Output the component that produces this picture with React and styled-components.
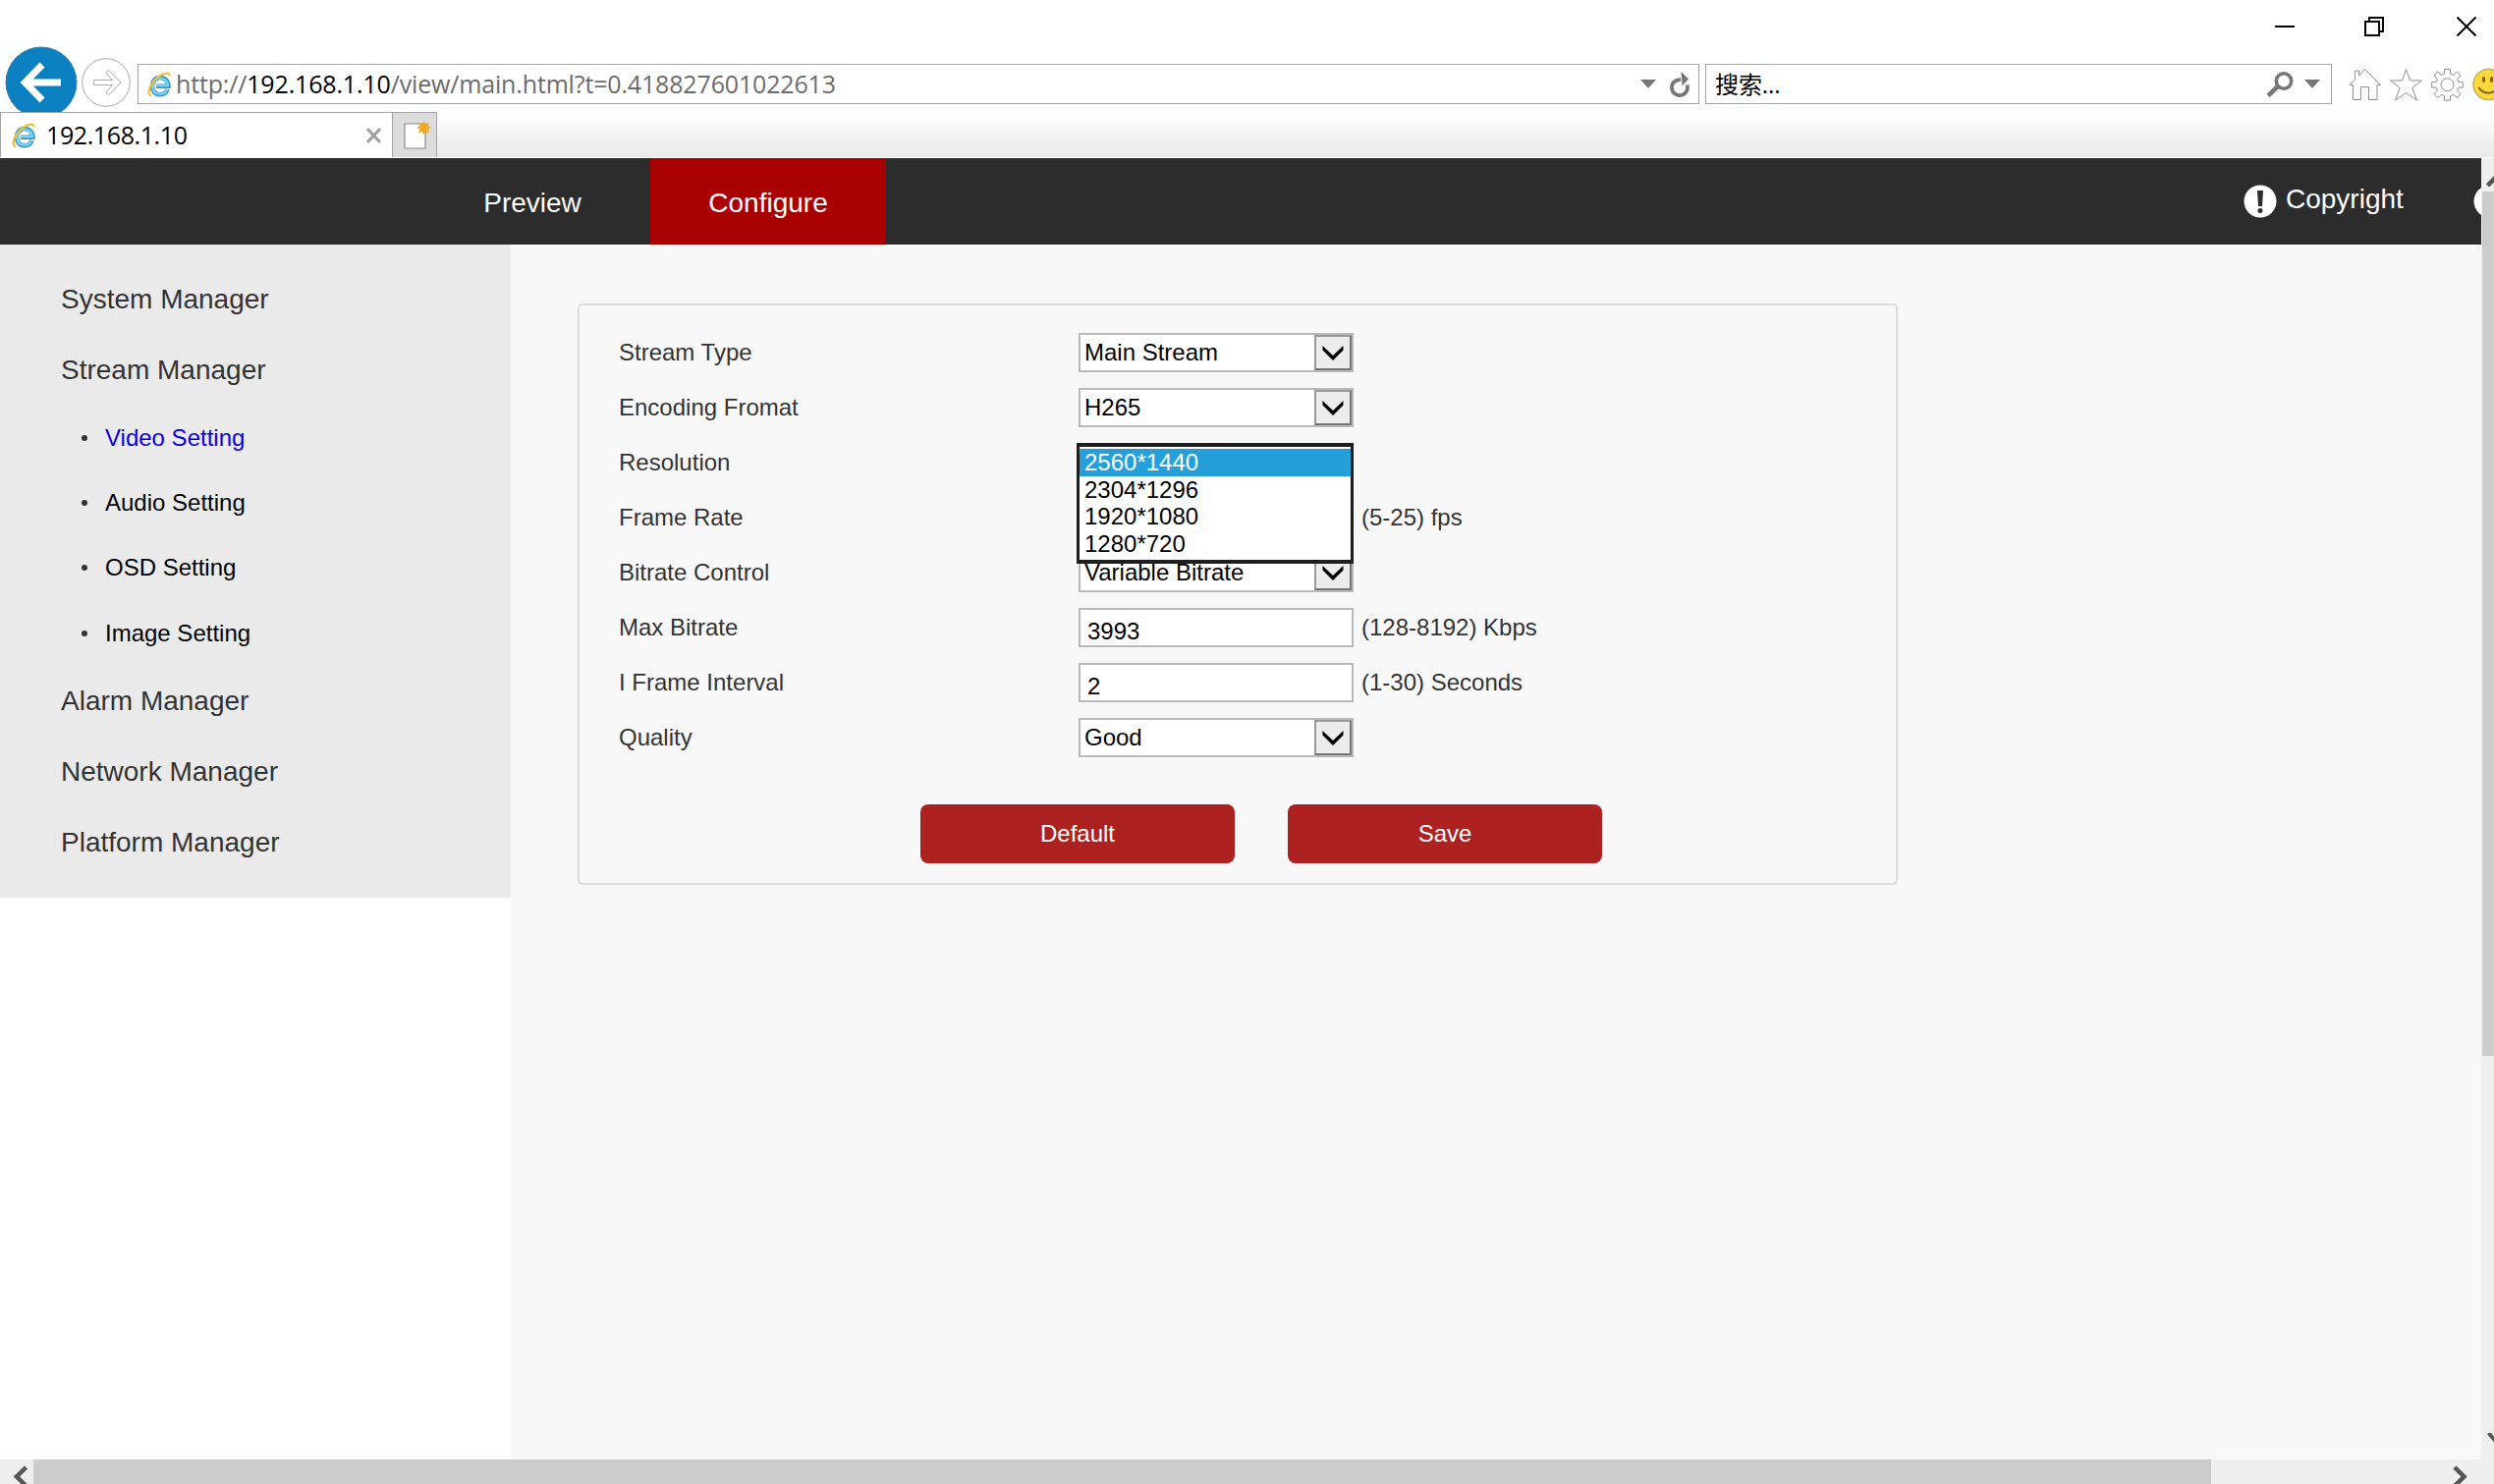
import * as React from 'react';
import styled, { createGlobalStyle } from 'styled-components';

const GlobalStyle = createGlobalStyle`
  * {
    box-sizing: border-box;
  }

  body {
    margin: 0;
    overflow: hidden;
    background: #fff;
    font-family: 'Liberation Sans', Arial, sans-serif;
  }
`;

const Window = styled.div`
  display: flex;
  flex-direction: column;
  width: 2539px;
  height: 1511px;
  overflow: hidden;
  background: #fdfefe;
`;

/* browser chrome */

const TitleBar = styled.div`
  display: flex;
  justify-content: flex-end;
  align-items: center;
  gap: 70px;
  height: 47px;
  padding: 7px 17px 0 0;
`;

const AddressRow = styled.div`
  display: flex;
  align-items: flex-start;
  height: 67px;
  overflow: hidden;
  padding-left: 5px;
`;

const BackButton = styled.svg`
  flex: none;
  width: 74px;
  height: 74px;
`;

const ForwardButton = styled.svg`
  flex: none;
  width: 50px;
  height: 50px;
  margin: 12px 7px 0 4px;
`;

const Field = styled.div`
  display: flex;
  align-items: center;
  flex: none;
  width: ${(p) => p.$width}px;
  height: 41px;
  margin: 18px 6px 0 0;
  padding: 0 ${(p) => p.$right}px 0 9px;
  border: 1px solid #a3a4a6;
  background: #fff;
`;

const Url = styled.div`
  flex: 1;
  margin-left: 4px;
  font: 25px/37px 'Open Sans', sans-serif;
  letter-spacing: -0.16px;
  color: #6b6b6b;

  b {
    font-weight: 400;
    color: #000;
  }
`;

const SearchText = styled.div`
  flex: 1;
  font: 24px/37px 'Open Sans', 'Noto Sans CJK SC', sans-serif;
  letter-spacing: -0.1px;
  color: #000;
`;

const Tools = styled.div`
  display: flex;
  flex: none;
  gap: 9px;
  margin: 22px 0 0 11px;
`;

const Icon = styled.svg`
  flex: none;
  display: block;
  margin-left: ${(p) => p.$left || 0}px;
`;

const TabStrip = styled.div`
  display: flex;
  height: 47px;
  border-bottom: 1px solid #fff;
  background: linear-gradient(#fdfdfd 10%, #e9e9e9);
`;

const Tab = styled.div`
  display: flex;
  align-items: center;
  width: 399px;
  padding: 0 11px 0 11px;
  border: solid #a3a4a6;
  border-width: 1px 0 0 1px;
  background: #fff;
  font: 25px/44px 'Open Sans', sans-serif;
  letter-spacing: -0.4px;

  span {
    flex: 1;
    margin: -1px 0 0 10px;
  }
`;

const NewTab = styled.div`
  width: 46px;
  padding: 6px 0 0 10px;
  border: 1px solid #a3a4a6;
  border-bottom: none;
  background: #dcdcdc;
`;

/* page */

const Viewport = styled.div`
  display: flex;
  height: 1325px;
`;

const Page = styled.div`
  width: 2526px;
  overflow: hidden;
`;

const NavBar = styled.div`
  display: flex;
  height: 88px;
  padding-left: 422px;
  background: #2c2c2c;
  color: #fff;
`;

const NavItem = styled.div`
  width: 240px;
  font-size: 28px;
  line-height: 92px;
  text-align: center;
  background: ${(p) => (p.$active ? '#a90000' : 'transparent')};
`;

const NavRight = styled.div`
  display: flex;
  align-items: flex-start;
  margin-left: auto;
  padding-top: 27px;
  font-size: 28px;
  line-height: 34px;
`;

const NavLink = styled.div`
  display: flex;
  width: 234px;

  span {
    margin: -2px 0 0 9px;
  }
`;

const Clip = styled.div`
  width: 8px;
  overflow: hidden;
`;

const Body = styled.div`
  display: flex;
  align-items: flex-start;
  height: 1237px;
`;

const Sidebar = styled.div`
  flex: none;
  width: 520px;
  height: 665px;
  padding-top: 20px;
  background: #eaeaea;
`;

const MenuItem = styled.div`
  height: 72px;
  padding-left: 62px;
  font-size: 28px;
  line-height: 72px;
  color: #333;
`;

const SubItem = styled.div`
  display: flex;
  align-items: center;
  height: 66.2px;
  padding-left: 83px;
  font-size: 24px;
  color: ${(p) => (p.$active ? '#0c00dc' : '#000')};

  &::before {
    content: '';
    width: 6px;
    height: 6px;
    margin-right: 18px;
    border-radius: 50%;
    background: #333;
  }
`;

const Content = styled.div`
  flex: 1;
  height: 100%;
  padding: 59px 0 0 68px;
  border-top: 1px solid #fff;
  background: #f8f8f8;
`;

const Panel = styled.div`
  width: 1344px;
  height: 592px;
  padding: 20px 0 0 40px;
  border: 2px solid #dcdddd;
  border-radius: 5px;
`;

const Row = styled.div`
  display: flex;
  height: 56px;
  padding-top: 8px;
  font-size: 24px;
  line-height: 40px;
  color: #333;
`;

const Label = styled.div`
  width: 468px;
`;

const Control = styled.div`
  position: relative;
  width: 280px;
  height: 40px;
  margin-right: 8px;
`;

const SelectBox = styled.div`
  display: flex;
  justify-content: space-between;
  height: 40px;
  padding-left: 4px;
  border: 2px solid #b9b9b9;
  background: #fff;
  line-height: 35px;
  color: #000;
`;

const Arrow = styled.div`
  display: flex;
  align-items: center;
  justify-content: center;
  width: 38px;
  border: 2px solid #757575;
  border-left-color: #999;
  border-top-color: #999;
  background: #ececec;
`;

const TextBox = styled.input`
  display: block;
  width: 280px;
  height: 40px;
  padding: 8px 0 0 7px;
  border: 2px solid #b9b9b9;
  background: #fff;
  font: 24px 'Liberation Sans', Arial, sans-serif;
  color: #000;
  outline: none;
`;

const Options = styled.div`
  position: absolute;
  z-index: 2;
  top: 0;
  left: -2px;
  width: 282px;
  height: 123px;
  padding-top: 2px;
  border: solid #1e1e1e;
  border-width: 4px 3px;
  background: #fff;
`;

const Option = styled.div`
  height: 27.5px;
  padding-left: 5px;
  line-height: 28px;
  color: ${(p) => (p.$selected ? '#fff' : '#000')};
  background: ${(p) => (p.$selected ? '#259fda' : 'transparent')};
`;

const Buttons = styled.div`
  display: flex;
  gap: 54px;
  margin: 40px 0 0 307px;
`;

const Button = styled.button`
  width: 320px;
  height: 60px;
  border: none;
  border-radius: 8px;
  background: #ae2121;
  color: #fff;
  font: 24px 'Liberation Sans', Arial, sans-serif;
`;

const VerticalScroll = styled.div`
  display: flex;
  flex-direction: column;
  width: 13px;
  padding: 15px 0 15px 1px;
  background: #efefef;
`;

const VerticalThumb = styled.div`
  flex: none;
  height: 880px;
  margin: 5px 0 auto;
  background: #cbcbcb;
`;

const HorizontalScroll = styled.div`
  display: flex;
  height: 25px;
  background: #efefef;
`;

const HorizontalThumb = styled.div`
  width: 2217px;
  margin: 0 246px 0 6px;
  background: #cbcbcb;
`;

const IeLogo = () => (
  <Icon width="25" height="26" viewBox="0 0 25 26" fill="none">
    <path d="M20.500 18C18.500 23 14.500 23.300 13 23.300 8 23.300 5 19.500 5 14.500S8.500 6 13 6s8.500 3.500 8.300 8.800H9" stroke="#2f8fc4" strokeWidth="4.600" />
    <path d="M19.800 18.200C18.500 22.500 14.500 22.800 13 22.800 8 22.800 5.500 19.500 5.500 14.500S8.500 6.500 13 6.500s8 3.500 7.800 7.800H9" stroke="#76d3f7" strokeWidth="2.600" />
    <path d="M4 24.500C-1.500 23 3 11 12 4.500 17 1 22.500.5 22.500 4" stroke="#efc22f" strokeWidth="2.200" />
  </Icon>
);

const Triangle = () => (
  <Icon width="16" height="9" viewBox="0 0 16 9">
    <path d="M0 0h16L8 9z" fill="#777" />
  </Icon>
);

const Alert = () => (
  <Icon width="34" height="34" viewBox="0 0 34 34">
    <circle cx="17" cy="17" r="16.500" fill="#fff" />
    <path d="M14 6h6l-1 16h-4z" fill="#2c2c2c" />
    <circle cx="17" cy="26.500" r="2.500" fill="#2c2c2c" />
  </Icon>
);

const Select = ({ children }) => (
  <SelectBox>
    {children}
    <Arrow>
      <svg width="22" height="15" viewBox="0 0 22 15">
        <path d="M.5 0L11 10 21.500 0v4.500L11 15 .5 4.500z" fill="#000" />
      </svg>
    </Arrow>
  </SelectBox>
);

const resolutions = ['2560*1440', '2304*1296', '1920*1080', '1280*720'];

const fields = [
  { label: 'Stream Type', select: 'Main Stream' },
  { label: 'Encoding Fromat', select: 'H265' },
  { label: 'Resolution', select: '2560*1440', options: resolutions },
  { label: 'Frame Rate', input: '25', hint: '(5-25) fps' },
  { label: 'Bitrate Control', select: 'Variable Bitrate' },
  { label: 'Max Bitrate', input: '3993', hint: '(128-8192) Kbps' },
  { label: 'I Frame Interval', input: '2', hint: '(1-30) Seconds' },
  { label: 'Quality', select: 'Good' },
];

const Chrome = () => (
  <>
    <TitleBar>
      <Icon width="21" height="20" viewBox="0 0 21 20">
        <path d="M0 10h20" stroke="#000" strokeWidth="2" />
      </Icon>
      <Icon width="21" height="20" viewBox="0 0 21 20" fill="none" stroke="#000" strokeWidth="2">
        <path d="M1 5h14v14H1zM5 5V1h14v14h-4" />
      </Icon>
      <Icon width="22" height="20" viewBox="0 0 22 20" $left={2}>
        <path d="M1.500 .5l19 19M20.500 .5l-19 19" stroke="#000" strokeWidth="2" />
      </Icon>
    </TitleBar>
    <AddressRow>
      <BackButton viewBox="0 0 74 74">
        <circle cx="37" cy="37" r="36" fill="#0a80c0" stroke="#3e7fa3" />
        <path d="M57 37H20M38 19L20.500 37 38 55" fill="none" stroke="#fff" strokeWidth="7" />
      </BackButton>
      <ForwardButton viewBox="0 0 50 50" fill="none" stroke="#a8a9ab">
        <circle cx="25" cy="25" r="24.300" />
        <path d="M12.500 22.500h19l-5.500-6c-2-2 1-5 3-3L40 25 29 36.500c-2 2-5-1-3-3l5.500-6h-19z" />
      </ForwardButton>
      <Field $width={1590} $right={8}>
        <IeLogo />
        <Url>
          http://<b>192.168.1.10</b>/view/main.html?t=0.418827601022613
        </Url>
        <Triangle />
        <Icon width="22" height="26" viewBox="0 0 22 26" $left={13}>
          <path d="M18.500 13.500A8 8 0 1 1 12 8.200" fill="none" stroke="#777" strokeWidth="3.800" />
          <path d="M12.500 0l7.500 7.500-6.500 7z" fill="#777" />
        </Icon>
      </Field>
      <Field $width={638} $right={11}>
        <SearchText>搜索...</SearchText>
        <Icon width="28" height="26" viewBox="0 0 28 26" fill="none" stroke="#777">
          <circle cx="18" cy="9.500" r="7.700" strokeWidth="3.600" />
          <path d="M12.500 14.500L2 24.500" strokeWidth="4.500" />
        </Icon>
        <Icon as="span" $left={11}>
          <Triangle />
        </Icon>
      </Field>
      <Tools>
        <Icon width="33" height="34" viewBox="0 0 33 34" fill="#fff" stroke="#8e8e8e">
          <path d="M4.500 17.500H.8L6.500 12V3h4v5L16.500 1.500 32.500 17.500H29v15h-8.500v-13h-8v13h-8z" />
        </Icon>
        <Icon width="33" height="34" viewBox="0 0 33 34" fill="#fff" stroke="#8e8e8e">
          <path d="M16.500 1.500l4 11.500h11.800l-9.500 7.600 4.700 12.400L16.500 25.500 5.500 33l4.700-12.400L.7 13h11.800z" />
        </Icon>
        <Icon width="33" height="34" viewBox="0 0 33 34" fill="#fff" stroke="#8e8e8e">
          <path d="M13.500 1.500h6V6l3 1.400L26.500 4l3.500 4-3.300 3.600 1.300 3h4.300v5.500H28l-1.500 3L30 26.500 26.500 30.500l-4-3.200-3 1.400v4.500h-6v-4.500l-3-1.400-4 3.200L3 26.500l3.500-3.400-1.500-3H.7v-5.500H5l1.300-3L3 8l3.500-4 4 3.400 3-1.400z" />
          <circle cx="16.500" cy="17.300" r="6.500" />
        </Icon>
        <Icon width="33" height="34" viewBox="0 0 33 34">
          <circle cx="16.500" cy="17" r="15.800" fill="#fbd83a" stroke="#a8975a" />
          <ellipse cx="11.500" cy="12" rx="1.600" ry="3" fill="#7a641a" />
          <ellipse cx="19.500" cy="12" rx="1.600" ry="3" fill="#7a641a" />
          <path d="M6.500 20c4 7.500 15 7.500 19 0" fill="none" stroke="#7a641a" strokeWidth="2" />
        </Icon>
      </Tools>
    </AddressRow>
    <TabStrip>
      <Tab>
        <IeLogo />
        <span>192.168.1.10</span>
        <Icon width="15" height="16" viewBox="0 0 15 16">
          <path d="M1 1l13 14M14 1L1 15" stroke="#a0a0a0" strokeWidth="3" />
        </Icon>
      </Tab>
      <NewTab>
        <svg width="30" height="33" viewBox="0 0 30 33">
          <path d="M2 5h21v25H2z" fill="#fff" stroke="#8a8a8a" strokeWidth="1.200" />
          <path d="M21.500 1.500l1.500 4 4-2-1.500 4 3.500 1.500-3.500 1.500 1.500 4-4-1.500-1.500 3.500-1.500-3.500-4 1.500 1.500-4L14 9l3.500-1.500-1.500-4 4 2z" fill="#f5a81c" />
        </svg>
      </NewTab>
    </TabStrip>
  </>
);

const Menu = () => (
  <Sidebar>
    <MenuItem>System Manager</MenuItem>
    <MenuItem>Stream Manager</MenuItem>
    <SubItem $active>Video Setting</SubItem>
    <SubItem>Audio Setting</SubItem>
    <SubItem>OSD Setting</SubItem>
    <SubItem>Image Setting</SubItem>
    <MenuItem>Alarm Manager</MenuItem>
    <MenuItem>Network Manager</MenuItem>
    <MenuItem>Platform Manager</MenuItem>
  </Sidebar>
);

const VideoForm = () => (
  <Panel>
    {fields.map(({ label, select, input, hint, options }) => (
      <Row key={label}>
        <Label>{label}</Label>
        <Control>
          {select ? <Select>{select}</Select> : <TextBox defaultValue={input} />}
          {options && (
            <Options>
              {options.map((option) => (
                <Option key={option} $selected={option === select}>
                  {option}
                </Option>
              ))}
            </Options>
          )}
        </Control>
        {hint}
      </Row>
    ))}
    <Buttons>
      <Button>Default</Button>
      <Button>Save</Button>
    </Buttons>
  </Panel>
);

const App = () => (
  <Window>
    <GlobalStyle />
    <Chrome />
    <Viewport>
      <Page>
        <NavBar>
          <NavItem>Preview</NavItem>
          <NavItem $active>Configure</NavItem>
          <NavRight>
            <NavLink>
              <Alert />
              <span>Copyright</span>
            </NavLink>
            <Clip>
              <Alert />
            </Clip>
          </NavRight>
        </NavBar>
        <Body>
          <Menu />
          <Content>
            <VideoForm />
          </Content>
        </Body>
      </Page>
      <VerticalScroll>
        <Icon width="12" height="14" viewBox="0 0 12 14" $left={4}>
          <path d="M1.500 13L11 3" stroke="#555" strokeWidth="4.500" />
        </Icon>
        <VerticalThumb />
        <Icon width="12" height="12" viewBox="0 0 12 12" $left={5}>
          <path d="M1.500 0L10 10" stroke="#555" strokeWidth="4" />
        </Icon>
      </VerticalScroll>
    </Viewport>
    <HorizontalScroll>
      <Icon width="14" height="25" viewBox="0 0 14 25" $left={14}>
        <path d="M12.500 8L3 17.500 12.500 27" fill="none" stroke="#555" strokeWidth="4.500" />
      </Icon>
      <HorizontalThumb />
      <Icon width="16" height="25" viewBox="0 0 16 25">
        <path d="M2 8l9.500 9.500L2 27" fill="none" stroke="#555" strokeWidth="4.500" />
      </Icon>
    </HorizontalScroll>
  </Window>
);

export default App;
